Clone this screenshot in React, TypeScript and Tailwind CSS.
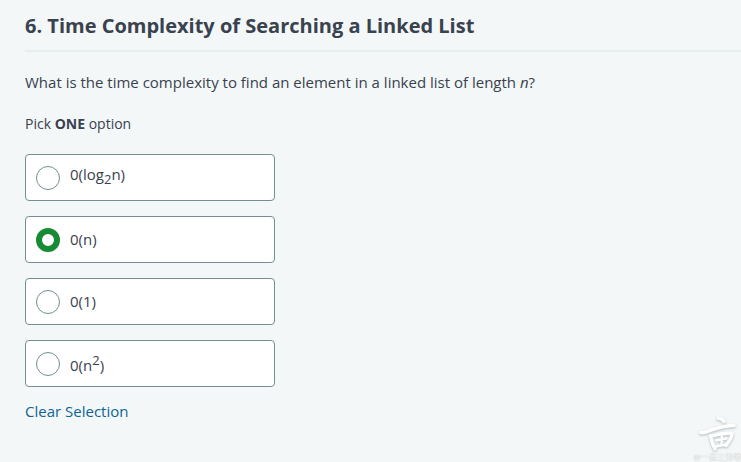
import { useState, type ReactNode } from "react";

type Option = { id: string; label: ReactNode };

const options: Option[] = [
  {
    id: "log",
    label: (
      <>
        0(log<sub className="static align-sub text-[13px] leading-5">2</sub>n)
      </>
    ),
  },
  { id: "linear", label: "0(n)" },
  { id: "constant", label: "0(1)" },
  {
    id: "quadratic",
    label: (
      <>
        0(n<sup className="static align-super text-[13px] leading-5">2</sup>)
      </>
    ),
  },
];

function Watermark() {
  return (
    <div className="absolute right-0 bottom-0 flex flex-col items-end">
      <svg
        className="h-9 w-11 drop-shadow-[0_1px_1px_rgba(110,120,130,0.5)]"
        viewBox="0 0 44 36"
        fill="none"
        stroke="#ffffff"
        strokeLinecap="round"
        strokeLinejoin="round"
        aria-hidden="true"
      >
        <path d="M21 2c2.500.5 5 1.500 6 3.500" strokeWidth="3.400" />
        <path d="M4 16.500c3 1 6-1 10-2.500 8-2.500 15-4.500 23-4.500" strokeWidth="3.600" />
        <path d="M13.500 20c1 4 1.500 8 4.500 13" strokeWidth="3.400" />
        <path d="M15 20c6-2 13-3.500 20-2.500 0 4-3 8-6 12" strokeWidth="3.400" />
        <path d="M24.500 18c.5 4 .5 7 0 10M19.500 24.500c4-1 6-1.500 10-2M19 30.500c4-1 6-1.500 10-1.500" strokeWidth="2.400" />
      </svg>
      <span className="text-[8px] leading-[10px] whitespace-nowrap text-white [text-shadow:0_0_1px_#8f989e]">
        @一亩三分地
      </span>
    </div>
  );
}

export default function App() {
  const [selected, setSelected] = useState<string | null>("linear");

  return (
    <main className="relative min-h-screen bg-[#f3f7f8] pl-[25px] font-['Open_Sans','Noto_Sans_CJK_SC',sans-serif] text-[15px] leading-5 text-[#39424e]">
      <h1 className="border-b-2 border-[#e7eeef] pt-[13px] pb-[11px] text-[20px] leading-[26px] font-bold">
        6. Time Complexity of Searching a Linked List
      </h1>
      <p className="pt-5">
        What is the time complexity to find an element in a linked list of length <em>n</em>?
      </p>
      <form onSubmit={(event) => event.preventDefault()}>
        <fieldset>
          <legend className="pt-[22px] pb-5 text-[14px]">
            Pick <strong className="font-bold">ONE</strong> option
          </legend>
          <div className="flex w-[250px] flex-col gap-[15px]">
            {options.map((option) => (
              <label
                key={option.id}
                className="flex min-h-[47px] cursor-pointer items-center gap-2.5 rounded-[4px] border border-[#738f93] bg-white px-2.5"
              >
                <input
                  type="radio"
                  name="complexity"
                  value={option.id}
                  checked={selected === option.id}
                  onChange={() => setSelected(option.id)}
                  className="size-6 shrink-0 appearance-none rounded-full border border-[#738f93] bg-white checked:border-6 checked:border-[#178a33]"
                />
                <span className="pb-0.5">{option.label}</span>
              </label>
            ))}
          </div>
        </fieldset>
        <button
          type="button"
          onClick={() => setSelected(null)}
          className="mt-3.5 cursor-pointer text-[#0f6394]"
        >
          Clear Selection
        </button>
      </form>
      <Watermark />
    </main>
  );
}
